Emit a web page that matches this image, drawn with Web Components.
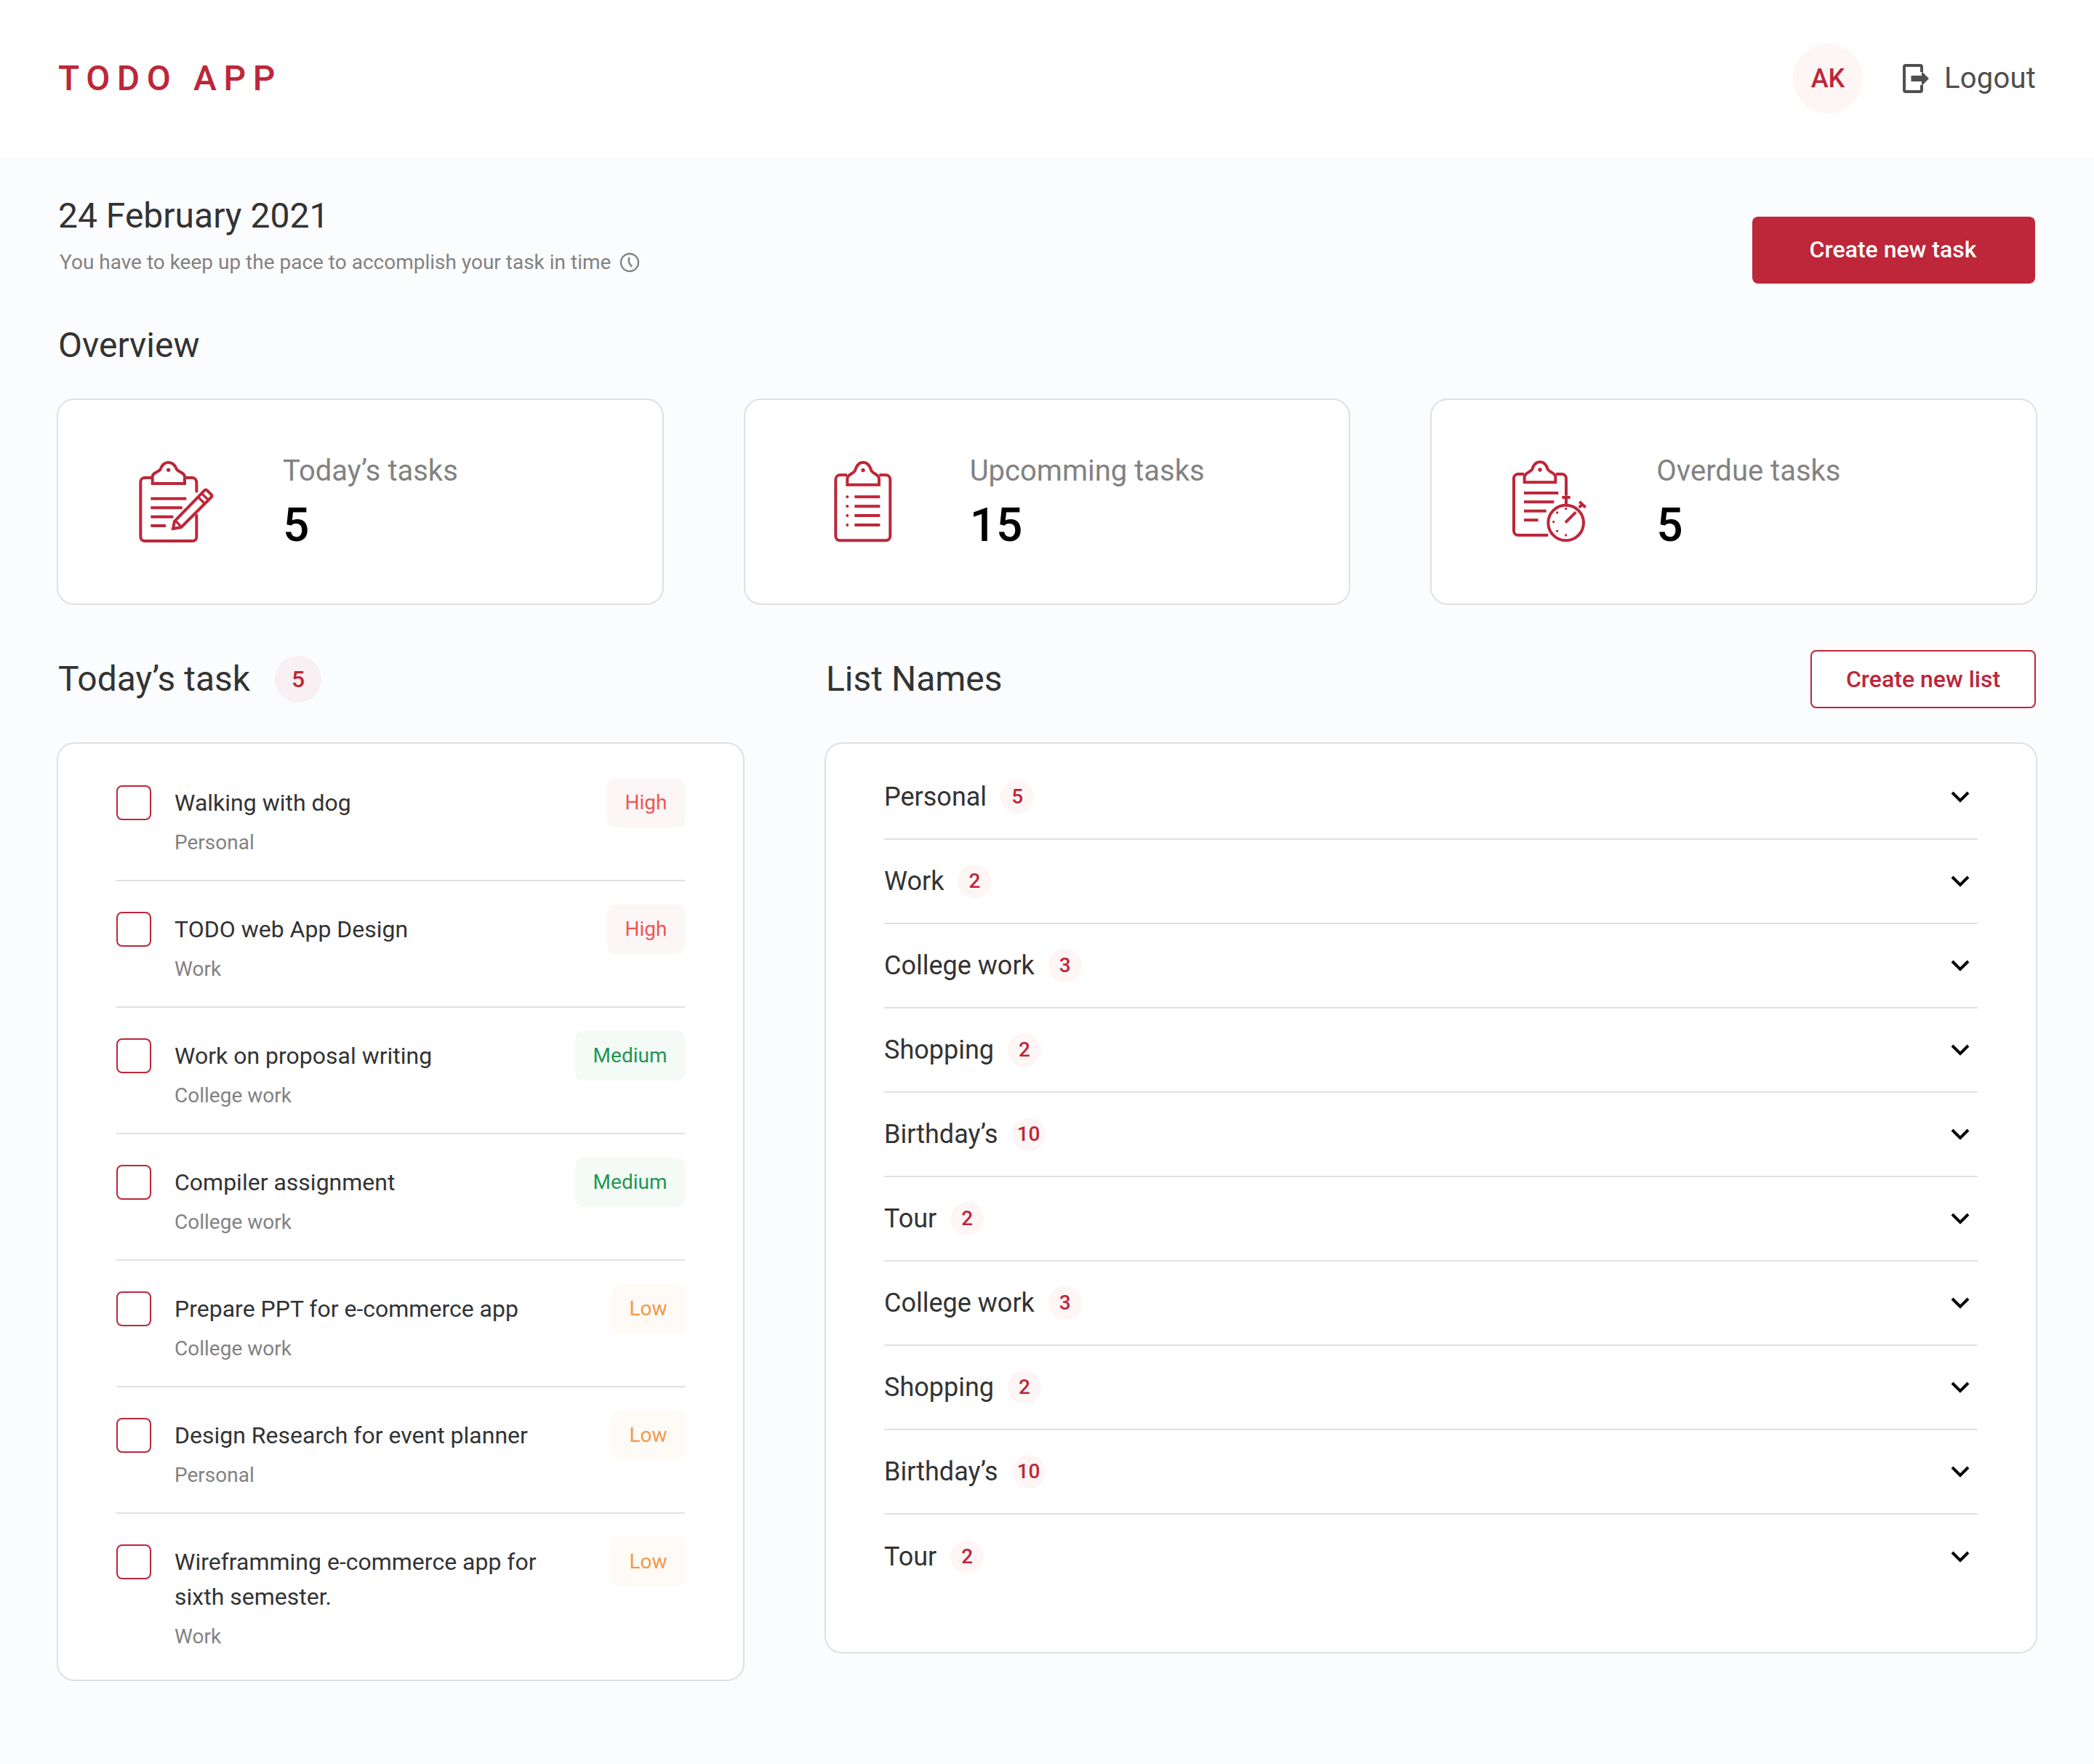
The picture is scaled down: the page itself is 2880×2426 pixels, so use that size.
<!DOCTYPE html>
<html lang="en">
<head>
<meta charset="utf-8">
<title>Todo App</title>
<style>
  html, body { margin: 0; background: #fbfcfe; }
  body { font-family: Roboto, "Liberation Sans", sans-serif; color: #333; }
</style>
</head>
<body>
<todo-app>
  <app-header slot="header" initials="AK"></app-header>
  <intro-bar slot="intro" date="24 February 2021" note="You have to keep up the pace to accomplish your task in time"></intro-bar>

  <stat-card slot="stats" icon="write" label="Today’s tasks" value="5"></stat-card>
  <stat-card slot="stats" icon="list" label="Upcomming tasks" value="15"></stat-card>
  <stat-card slot="stats" icon="timer" label="Overdue tasks" value="5"></stat-card>

  <section-head slot="left-head" title="Today’s task" count="5"></section-head>
  <panel-card slot="left" class="tasks">
    <task-item list="Personal" priority="High">Walking with dog</task-item>
    <task-item list="Work" priority="High">TODO web App Design</task-item>
    <task-item list="College work" priority="Medium">Work on proposal writing</task-item>
    <task-item list="College work" priority="Medium">Compiler assignment</task-item>
    <task-item list="College work" priority="Low">Prepare PPT for e-commerce app</task-item>
    <task-item list="Personal" priority="Low">Design Research for event planner</task-item>
    <task-item list="Work" priority="Low">Wireframming e-commerce app for sixth semester.</task-item>
  </panel-card>

  <section-head slot="right-head" title="List Names"><outline-button>Create new list</outline-button></section-head>
  <panel-card slot="right" class="lists">
    <list-row count="5">Personal</list-row>
    <list-row count="2">Work</list-row>
    <list-row count="3">College work</list-row>
    <list-row count="2">Shopping</list-row>
    <list-row count="10">Birthday’s</list-row>
    <list-row count="2">Tour</list-row>
    <list-row count="3">College work</list-row>
    <list-row count="2">Shopping</list-row>
    <list-row count="10">Birthday’s</list-row>
    <list-row count="2">Tour</list-row>
  </panel-card>
</todo-app>

<script>
const RED = '#be2639';

// clipboard icons are traced from the design, viewBox is 3x the real size
const ICONS = {
  write: `<svg width="110" height="120" viewBox="117 90 330 360" fill="none" stroke="${RED}" stroke-width="12">
    <path d="M178 171H150a17 17 0 0 0-17 17V415a17 17 0 0 0 17 17H348a16 16 0 0 0 16-17V322"/>
    <path d="M320 171H345a19 19 0 0 1 19 18V232"/>
    <path d="M182 195V168C182 150 202 150 214 138C220 120 232 108 248 108C264 108 276 120 283 138C295 150 315 150 315 168V195Z"/>
    <circle cx="248" cy="139" r="8" fill="${RED}" stroke="none"/>
    <path d="M175 257H322M175 295H305M175 332H268M175 369H237"/>
    <path d="M267 381L273 351L396 224Q402 218 408 224L424 240Q430 246 424 252L300 376Z"/>
    <path d="M275 347L304 376M370 250L399 279M385 236L414 264" stroke-width="10"/>
  </svg>`,
  list: `<svg width="110" height="120" viewBox="69 60 330 360" fill="none" stroke="${RED}" stroke-width="12">
    <path d="M165 130H136a18 18 0 0 0-18 18V382a18 18 0 0 0 18 18H325a18 18 0 0 0 18-18V148a18 18 0 0 0-18-18H298"/>
    <path d="M166 170V145C166 128 186 128 198 112C204 90 216 78 231 78C247 78 259 90 265 112C277 128 297 128 297 145V170Z"/>
    <circle cx="231" cy="110" r="8" fill="${RED}" stroke="none"/>
    <path d="M196 220H301M196 259H301M196 297H301M196 336H301"/>
    <g fill="${RED}" stroke="none"><circle cx="166" cy="220" r="6"/><circle cx="166" cy="259" r="6"/><circle cx="166" cy="297" r="6"/><circle cx="166" cy="336" r="6"/></g>
  </svg>`,
  timer: `<svg width="110" height="120" viewBox="81 60 330 360" fill="none" stroke="${RED}" stroke-width="12">
    <path d="M138 126H114a18 18 0 0 0-18 18V360a18 18 0 0 0 18 18H238"/>
    <path d="M270 126H294a18 18 0 0 1 18 18V215"/>
    <path d="M140 160V138C140 122 160 122 172 106C178 86 190 76 204 76C218 76 230 86 236 106C248 122 268 122 268 138V160Z"/>
    <circle cx="204" cy="108" r="8" fill="${RED}" stroke="none"/>
    <path d="M138 204H280M138 241H262M138 278H230M138 316H197"/>
    <circle cx="311" cy="327" r="73"/>
    <path d="M295 222H329M312 222V254M367 240L392 263M365 264L380 250M309 326L352 283"/>
    <g fill="${RED}" stroke="none"><circle cx="311" cy="269" r="5"/><circle cx="275" cy="285" r="5"/><circle cx="260" cy="323" r="5"/><circle cx="275" cy="361" r="5"/><circle cx="311" cy="378" r="5"/></g>
  </svg>`,
  logout: `<svg width="36" height="40" viewBox="0 0 36 40" fill="none" stroke="#4f4f4f" stroke-width="4">
    <path d="M26 11V4a2 2 0 0 0-2-2H4a2 2 0 0 0-2 2V36a2 2 0 0 0 2 2H24a2 2 0 0 0 2-2V29"/>
    <path d="M11.5 16H26V10L36 20L26 30V24H11.5Z" fill="#4f4f4f" stroke="none"/>
  </svg>`,
  clock: `<svg width="28" height="28" viewBox="0 0 28 28" fill="none" stroke="#828282" stroke-width="2.4">
    <circle cx="14" cy="14" r="12"/>
    <path d="M13 7V14L17 20"/>
  </svg>`,
  chevron: `<svg width="26" height="16" viewBox="0 0 26 16" fill="none" stroke="#000" stroke-width="4">
    <path d="M2 2L13 13L24 2"/>
  </svg>`
};

class AppIcon extends HTMLElement {
  connectedCallback() {
    this.attachShadow({mode: 'open'}).innerHTML = `
      <style>:host{display:inline-flex;flex:none;line-height:0}</style>
      ${ICONS[this.getAttribute('name')]}`;
  }
}

class TodoApp extends HTMLElement {
  connectedCallback() {
    this.attachShadow({mode: 'open'}).innerHTML = `
      <style>
        :host{display:block;min-height:2426px;box-sizing:border-box}
        main{padding:0 78px 115px}
        h2{margin:57px 2px 45px;font:400 48px/56px Roboto,sans-serif;color:#333}
        .stats{display:grid;grid-template-columns:repeat(3,1fr);gap:110px}
        .cols{display:grid;grid-template-columns:946px 1fr;column-gap:110px;margin-top:62px;align-items:start}
        .col{display:flex;flex-direction:column;gap:47px}
      </style>
      <slot name="header"></slot>
      <main>
        <slot name="intro"></slot>
        <h2>Overview</h2>
        <div class="stats"><slot name="stats"></slot></div>
        <div class="cols">
          <div class="col"><slot name="left-head"></slot><slot name="left"></slot></div>
          <div class="col"><slot name="right-head"></slot><slot name="right"></slot></div>
        </div>
      </main>`;
  }
}

class AppHeader extends HTMLElement {
  connectedCallback() {
    this.attachShadow({mode: 'open'}).innerHTML = `
      <style>
        :host{display:flex;align-items:center;justify-content:space-between;height:216px;padding:0 80px;background:#fff;box-sizing:border-box}
        .logo{font:500 48px/56px Roboto,sans-serif;letter-spacing:9.6px;color:${RED}}
        .right{display:flex;align-items:center}
        .avatar{width:96px;height:96px;border-radius:50%;background:#fef5f5;color:${RED};font:500 36px/96px Roboto,sans-serif;text-align:center;margin-right:55px}
        .logout{display:flex;align-items:center;gap:21px;font:400 40px/48px Roboto,sans-serif;letter-spacing:.2px;color:#4f4f4f}
      </style>
      <div class="logo">TODO APP</div>
      <div class="right">
        <div class="avatar">${this.getAttribute('initials')}</div>
        <div class="logout"><app-icon name="logout"></app-icon><span>Logout</span></div>
      </div>`;
  }
}

class IntroBar extends HTMLElement {
  connectedCallback() {
    this.attachShadow({mode: 'open'}).innerHTML = `
      <style>
        :host{display:flex;justify-content:space-between;align-items:flex-start;padding:53px 0 0 2px;height:174px;box-sizing:border-box}
        .date{font:400 48px/56px Roboto,sans-serif;color:#333}
        .note{display:flex;align-items:center;gap:12px;margin:16px 0 0 2px;font:400 28px/40px Roboto,sans-serif;color:#828282}
        button{margin:29px 3px 0 0;width:389px;height:92px;border:0;border-radius:8px;background:${RED};color:#fff;font:500 32px Roboto,sans-serif;padding:0 2px 2px 0}
      </style>
      <div>
        <div class="date">${this.getAttribute('date')}</div>
        <div class="note"><span>${this.getAttribute('note')}</span><app-icon name="clock"></app-icon></div>
      </div>
      <button>Create new task</button>`;
  }
}

class StatCard extends HTMLElement {
  connectedCallback() {
    this.attachShadow({mode: 'open'}).innerHTML = `
      <style>
        :host{display:flex;align-items:center;height:284px;box-sizing:border-box;background:#fff;border:2px solid #e0e0e0;border-radius:24px;padding:0 0 0 108px}
        app-icon{margin-right:91px}
        .text{padding-top:4px}
        .label{font:400 40px/48px Roboto,sans-serif;color:#828282}
        .value{margin-top:13px;font:500 64px/75px Roboto,sans-serif;color:#000}
      </style>
      <app-icon name="${this.getAttribute('icon')}"></app-icon>
      <div class="text">
        <div class="label">${this.getAttribute('label')}</div>
        <div class="value">${this.getAttribute('value')}</div>
      </div>`;
  }
}

class CountBadge extends HTMLElement {
  connectedCallback() {
    const big = this.hasAttribute('big');
    const size = big ? 64 : 46;
    this.attachShadow({mode: 'open'}).innerHTML = `
      <style>
        :host{display:inline-block;flex:none;min-width:${size}px;height:${size}px;border-radius:50%;box-sizing:border-box;
          background:${big ? '#f8f0f2' : '#fef5f5'};color:${RED};text-align:center;font:500 ${big ? 32 : 28}px/${size}px Roboto,sans-serif}
      </style><slot></slot>`;
  }
}

class SectionHead extends HTMLElement {
  connectedCallback() {
    const count = this.getAttribute('count');
    this.attachShadow({mode: 'open'}).innerHTML = `
      <style>
        :host{display:flex;align-items:center;height:80px;padding-left:2px}
        .title{font:400 48px/56px Roboto,sans-serif;color:#333}
        count-badge{margin-left:34px}
        .end{margin-left:auto;display:flex}
      </style>
      <span class="title">${this.getAttribute('title')}</span>
      ${count ? `<count-badge big>${count}</count-badge>` : ''}
      <div class="end"><slot></slot></div>`;
  }
}

class OutlineButton extends HTMLElement {
  connectedCallback() {
    this.attachShadow({mode: 'open'}).innerHTML = `
      <style>
        :host{display:block;width:310px;height:80px;margin-right:2px;box-sizing:border-box;border:2px solid ${RED};border-radius:8px;
          background:#fff;color:${RED};font:500 32px/76px Roboto,sans-serif;text-align:center}
      </style><slot></slot>`;
  }
}

class PanelCard extends HTMLElement {
  connectedCallback() {
    const lists = this.classList.contains('lists');
    this.attachShadow({mode: 'open'}).innerHTML = `
      <style>
        :host{display:block;box-sizing:border-box;background:#fff;border:2px solid #e0e0e0;border-radius:24px;
          padding:${lists ? '16px 80px 73px' : '15px 80px 8px'}}
      </style><slot></slot>`;
  }
}

const TAG_COLORS = {
  High: ['#fdf6f6', '#eb5757'],
  Medium: ['#f4faf6', '#219653'],
  Low: ['#fefaf5', '#f2994a']
};

class PriorityTag extends HTMLElement {
  connectedCallback() {
    const [bg, fg] = TAG_COLORS[this.textContent.trim()];
    this.attachShadow({mode: 'open'}).innerHTML = `
      <style>
        :host{display:block;flex:none;height:68px;padding:0 24.5px;border-radius:10px;background:${bg};color:${fg};font:400 28px/68px Roboto,sans-serif}
      </style><slot></slot>`;
  }
}

class TaskItem extends HTMLElement {
  connectedCallback() {
    this.attachShadow({mode: 'open'}).innerHTML = `
      <style>
        :host{display:flex;align-items:flex-start;padding:32px 0 31px;border-bottom:2px solid #e0e0e0}
        :host(:last-child){border-bottom:0}
        .box{flex:none;width:48px;height:48px;box-sizing:border-box;border:2px solid ${RED};border-radius:8px;margin:10px 32px 0 0}
        .text{flex:1;margin-top:10px}
        .title{max-width:500px;font:400 32px/48px Roboto,sans-serif;color:#333}
        .list{margin-top:11px;font:400 28px/40px Roboto,sans-serif;color:#828282}
      </style>
      <div class="box"></div>
      <div class="text">
        <div class="title"><slot></slot></div>
        <div class="list">${this.getAttribute('list')}</div>
      </div>
      <priority-tag>${this.getAttribute('priority')}</priority-tag>`;
  }
}

class ListRow extends HTMLElement {
  connectedCallback() {
    this.attachShadow({mode: 'open'}).innerHTML = `
      <style>
        :host{display:flex;align-items:center;height:116px;box-sizing:border-box;border-bottom:2px solid #e0e0e0;font:400 36px/48px Roboto,sans-serif;color:#333}
        :host(:last-child){border-bottom:0}
        count-badge{margin-left:19px}
        app-icon{margin-left:auto;margin-right:11px}
      </style>
      <slot></slot>
      <count-badge>${this.getAttribute('count')}</count-badge>
      <app-icon name="chevron"></app-icon>`;
  }
}

customElements.define('app-icon', AppIcon);
customElements.define('count-badge', CountBadge);
customElements.define('priority-tag', PriorityTag);
customElements.define('outline-button', OutlineButton);
customElements.define('app-header', AppHeader);
customElements.define('intro-bar', IntroBar);
customElements.define('stat-card', StatCard);
customElements.define('section-head', SectionHead);
customElements.define('panel-card', PanelCard);
customElements.define('task-item', TaskItem);
customElements.define('list-row', ListRow);
customElements.define('todo-app', TodoApp);
</script>
</body>
</html>
